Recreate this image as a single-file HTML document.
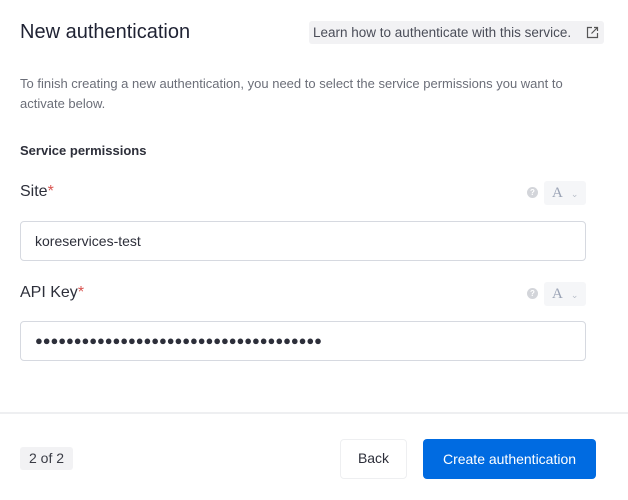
<!DOCTYPE html>
<html><head><style>
body{margin:0;width:628px;height:500px;background:#fff;font-family:"Liberation Sans",sans-serif;color:#2d2f3a;position:relative;overflow:hidden}
.a{position:absolute}
.h{left:20px;top:21px;font-size:20px;color:#1f2233}
.lnk{left:309px;top:21px;width:295px;height:23px;background:#f2f2f4;border-radius:3px;font-size:13.5px;color:#4a4d58;line-height:23px;padding-left:4px;box-sizing:border-box}
.p{left:20px;top:74px;font-size:13px;line-height:20px;color:#6b6e78;width:580px}
.sp{left:20px;top:143px;font-size:13px;font-weight:bold;color:#2d2f3a}
.lab{left:20px;font-size:16px;color:#2d2f3a}
.lab span{color:#d9534f}
.inp{left:20px;width:566px;height:40px;border:1px solid #d6d9e0;border-radius:4px;box-sizing:border-box;font-size:14px;line-height:38px;padding-left:14px;color:#2d2f3a}
.q{width:11px;height:11px;border-radius:50%;background:#d3d5da;color:#fff;font-size:8px;font-weight:bold;text-align:center;line-height:11px}
.sel{width:42px;height:24px;background:#f5f6f8;border-radius:3px;font-size:15px;color:#9aa3b5;line-height:24px;padding-left:8px;box-sizing:border-box;font-family:"Liberation Serif",serif}
.sel i{font-style:normal;font-size:9px;margin-left:8px;color:#b8bec9}
</style></head><body>
<div class="a h">New authentication</div>
<div class="a lnk">Learn how to authenticate with this service.<svg style="position:absolute;right:5px;top:5px" width="13" height="13" viewBox="0 0 13 13" fill="none" stroke="#555" stroke-width="1.2"><path d="M6 1.5H1.5v10h10V7"/><path d="M8 1.5h3.5V5M11.5 1.5 5.5 7.5"/></svg></div>
<div class="a p">To finish creating a new authentication, you need to select the service permissions you want to activate below.</div>
<div class="a sp">Service permissions</div>
<div class="a lab" style="top:183px">Site<span>*</span></div>
<div class="a q" style="left:527px;top:187px">?</div>
<div class="a sel" style="left:544px;top:181px">A<i>⌄</i></div>
<div class="a inp" style="top:221px">koreservices-test</div>
<div class="a lab" style="top:284px">API Key<span>*</span></div>
<div class="a q" style="left:527px;top:288px">?</div>
<div class="a sel" style="left:544px;top:282px">A<i>⌄</i></div>
<div class="a inp" style="top:321px;font-size:13px;letter-spacing:-0.1px">●●●●●●●●●●●●●●●●●●●●●●●●●●●●●●●●●●●●●</div>
<div class="a" style="left:0;top:412px;width:628px;height:2px;background:#eeeff1"></div>
<div class="a" style="left:20px;top:447px;width:53px;height:23px;background:#f2f2f4;border-radius:3px;font-size:14px;line-height:23px;text-align:center;color:#3a3c45">2 of 2</div>
<div class="a" style="left:340px;top:439px;width:67px;height:40px;border:1.5px solid #eeeff1;border-radius:4px;box-sizing:border-box;font-size:14px;line-height:37px;text-align:center;color:#2d2f3a">Back</div>
<div class="a" style="left:423px;top:439px;width:173px;height:40px;background:#006be1;border-radius:4px;font-size:14px;line-height:40px;text-align:center;color:#fff">Create authentication</div>
</body></html>
